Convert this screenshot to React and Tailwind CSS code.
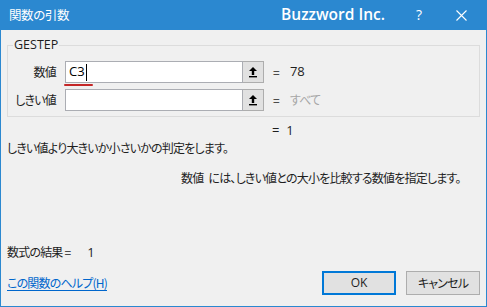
import React from "react";

const jp = "font-['Meiryo_UI','Noto_Sans_CJK_JP',sans-serif] [font-feature-settings:'palt']";

const RefIcon = () => (
  <svg width="10" height="12" viewBox="0 0 10 12" className="block">
    <path d="M5 1 L9 5 L6.2 5 L6.2 9 L3.8 9 L3.8 5 L1 5 Z" fill="#000" />
    <rect x="1" y="10" width="8" height="1.4" fill="#000" />
  </svg>
);

const ArgRow = ({ label, value, result, muted, caret }) => (
  <div className="flex items-center h-[22px]">
    <div className="w-[48px] text-right text-[12px] text-[#1e1e1e]">{label}</div>
    <div className="relative ml-[9px] w-[178px] h-[22px] bg-white border border-[#abadb3] flex items-center pl-[3px] text-[13px] text-black tracking-normal font-['Segoe_UI','Open_Sans',sans-serif]">
      {value}
      {caret && <span className="ml-px w-px h-[17px] bg-black" />}
      {caret && <span className="absolute left-[-2px] top-[22px] w-[29px] h-[2px] bg-[#c42727] rounded-full" />}
    </div>
    <button type="button" className="-ml-px w-[22px] h-[22px] bg-[#e1e1e1] border border-[#adadad] flex items-center justify-center">
      <RefIcon />
    </button>
    <div className="ml-[9px] text-[12px] text-[#1e1e1e]">=</div>
    <div className={`ml-[11px] text-[12px] ${muted ? "text-[#a6a6a6]" : "text-[#1e1e1e] tracking-normal font-['Segoe_UI','Open_Sans',sans-serif] text-[13px]"}`}>
      {result}
    </div>
  </div>
);

export default function App() {
  return (
    <div className={`w-[487px] h-[307px] bg-[#2b88d0] px-px pb-px flex flex-col ${jp}`}>
      {/* Title bar */}
      <div className="h-[30px] flex items-center text-white">
        <div className="pl-[8px] text-[12.5px] leading-none tracking-[-0.4px]">関数の引数</div>
        <div className="ml-auto text-[15.5px] font-semibold font-['Segoe_UI','Open_Sans',sans-serif] [font-feature-settings:normal] leading-none">
          Buzzword Inc.
        </div>
        <div className="ml-[31px] text-[14px] font-['Segoe_UI','Open_Sans',sans-serif] leading-none">?</div>
        <svg width="11" height="11" viewBox="0 0 11 11" className="ml-[34px] mr-[19px]">
          <path d="M0.5 0.5 L10.5 10.5 M10.5 0.5 L0.5 10.5" stroke="#fff" strokeWidth="1.1" />
        </svg>
      </div>

      {/* Body */}
      <div className="flex-1 bg-[#f0f0f0] flex flex-col text-[12px] text-[#1e1e1e] tracking-[-0.8px] whitespace-nowrap">
        <fieldset className="mx-[6px] mt-[7px] border border-[#dcdcdc] pt-[8px] pb-[5px] flex flex-col gap-[6px]">
          <legend className="ml-[5px] px-px text-[12.5px] text-[#1e1e1e] tracking-normal font-['Segoe_UI','Open_Sans',sans-serif] leading-[16px]">
            GESTEP
          </legend>
          <ArgRow label="数値" value="C3" result="78" caret />
          <ArgRow label="しきい値" value="" result="すべて" muted />
        </fieldset>

        <div className="h-4 leading-4 mt-[5px] pl-[271px] font-['Segoe_UI','Open_Sans',sans-serif] text-[13px] tracking-normal">
          =&nbsp;&nbsp;1
        </div>
        <div className="h-4 leading-4 mt-[2px] pl-[6px]">しきい値より大きいか小さいかの判定をします。</div>
        <div className="h-4 leading-4 mt-[14px] pl-[180px]">
          数値<span className="ml-[5px]">には、しきい値との大小を比較する数値を指定します。</span>
        </div>

        <div className="h-4 leading-4 mt-[58px] pl-[6px]">
          数式の結果 =<span className="ml-[17px] font-['Segoe_UI','Open_Sans',sans-serif] text-[13px] tracking-normal">1</span>
        </div>

        <div className="mt-[11px] h-[24px] flex items-center pl-[6px] pr-[6px]">
          <a href="#" className="text-[#0066cc] underline underline-offset-2 decoration-[#0066cc]">
            この関数のヘルプ(H)
          </a>
          <button type="button" className="ml-auto w-[74px] h-[24px] bg-[#e1e1e1] border-2 border-[#0078d7] text-[12px] tracking-normal font-['Segoe_UI','Open_Sans',sans-serif] text-[#1e1e1e]">
            OK
          </button>
          <button type="button" className="ml-[10px] w-[74px] h-[24px] bg-[#e1e1e1] border border-[#adadad] text-[12px] text-[#1e1e1e]">
            キャンセル
          </button>
        </div>
      </div>
    </div>
  );
}
